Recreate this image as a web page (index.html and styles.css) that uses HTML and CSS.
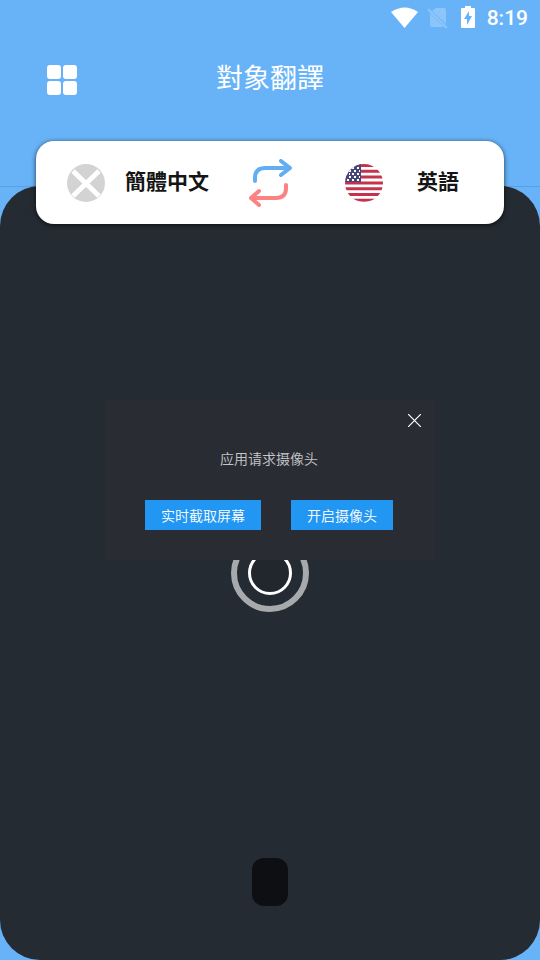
FILE: index.html
```html
<!DOCTYPE html>
<html lang="zh-Hant">
<head>
<meta charset="utf-8">
<meta name="viewport" content="width=device-width, initial-scale=1">
<title>對象翻譯</title>
<link rel="stylesheet" href="styles.css">
</head>
<body>
<div class="app">
  <div class="status">
    <svg class="wifi" width="28" height="22" viewBox="0 0 28 22" aria-hidden="true"><path d="M0 5Q14-4 27 5L13.500 21Z" fill="#fff"/></svg>
    <svg class="sim" width="22" height="22" viewBox="0 0 22 22" aria-hidden="true"><path d="M9 1h8q2 0 2 2v14L5 4zM3 7l14 13H5q-2 0-2-2z" fill="#8cc5fa"/><path d="M3 5l17 16M1 2l18 18" stroke="#8cc5fa" stroke-width="2"/></svg>
    <svg class="battery" width="14" height="22" viewBox="0 0 14 22" aria-hidden="true"><path d="M4 0h6v2h3q1 0 1 1v18q0 1-1 1H1q-1 0-1-1V3q0-1 1-1h3z" fill="#fff"/><path d="M8 5v5h3l-5 9v-6H3z" fill="#68b3f8"/></svg>
    <span class="clock">8:19</span>
  </div>
  <header class="header">
    <button class="menu" type="button" aria-label="選單">
      <svg width="30" height="30" viewBox="0 0 30 30" fill="#fff"><rect width="14" height="14" rx="3"/><rect x="16" width="14" height="14" rx="3"/><rect y="16" width="14" height="14" rx="3"/><rect x="16" y="16" width="14" height="14" rx="3"/></svg>
    </button>
    <h1 class="title">對象翻譯</h1>
  </header>
  <section class="languages">
    <button class="language source" type="button">
      <svg width="38" height="38" viewBox="0 0 38 38" aria-hidden="true"><circle cx="19" cy="19" r="19" fill="#d3d3d3"/><path d="M6 7l26 25M32 7L6 32" stroke="#fff" stroke-width="5"/></svg>
      <span class="name">簡體中文</span>
    </button>
    <button class="swap" type="button" aria-label="交換語言">
      <svg width="44" height="48" viewBox="0 0 44 48" fill="none" stroke-width="4" stroke-linecap="round" stroke-linejoin="round"><path d="M7 22v-3q0-10 10-10h24M33 2l9 7-9 7" stroke="#63aef3"/><path d="M38 26v3q0 10-10 10H3M11 32l-8 7 8 7" stroke="#fb8384"/></svg>
    </button>
    <button class="language target" type="button">
      <svg width="38" height="38" viewBox="0 0 38 38" aria-hidden="true">
        <defs><clipPath id="disc"><circle cx="19" cy="19" r="19"/></clipPath></defs>
        <g clip-path="url(#disc)"><path d="M0 0h38v38H0z" fill="#fff"/><path d="M0 1.500h38M0 7.300h38M0 13.100h38M0 18.900h38M0 24.700h38M0 30.500h38M0 36.300h38" stroke="#c4324b" stroke-width="3"/><path d="M0 0h16v18H0z" fill="#46467a"/><path d="M7 4h2M12 4h2M4 7h2M9 7h2M14 7h1M7 10h2M12 10h2M4 10h1M4 13h2M9 13h2M14 13h1M2 16h2M7 16h2M12 16h2" stroke="#fff" stroke-width="2"/></g>
      </svg>
      <span class="name">英語</span>
    </button>
  </section>
  <main class="stage">
    <div class="camera">
      <button class="shutter" type="button" aria-label="拍照"><span class="shutter-core"></span></button>
      <button class="pill" type="button" aria-label="閃光燈"></button>
    </div>
  </main>
  <div class="overlay">
    <div class="dialog" role="dialog" aria-labelledby="request" lang="zh-Hans">
      <button class="close" type="button" aria-label="关闭">
        <svg width="13" height="13" viewBox="0 0 13 13" stroke="#fff" stroke-width="1.2"><path d="M0 0l13 13M13 0L0 13"/></svg>
      </button>
      <p class="message" id="request">应用请求摄像头</p>
      <div class="actions">
        <button class="action" type="button">实时截取屏幕</button>
        <button class="action" type="button">开启摄像头</button>
      </div>
    </div>
  </div>
</div>
</body>
</html>
```
FILE: styles.css
```css
* {
  box-sizing: border-box;
}

body {
  margin: 0;
  background: #68b3f8;
  font-family: "Noto Sans CJK TC", sans-serif;
}

button {
  margin: 0;
  padding: 0;
  border: 0;
  background: none;
  color: inherit;
  font: inherit;
}

svg {
  display: block;
  flex: none;
}

.app {
  position: relative;
  display: flex;
  flex-direction: column;
  min-height: 100vh;
}

.status {
  display: flex;
  align-items: center;
  justify-content: flex-end;
  height: 36px;
  padding: 0 12px;
  color: #fff;
}

.sim {
  margin: 0 12px 0 8px;
}

.battery {
  margin-bottom: 2px;
}

.clock {
  margin-left: 12px;
  font: 500 21px/36px Roboto, sans-serif;
}

.header {
  display: grid;
  grid-template-columns: 30px 1fr 30px;
  align-items: center;
  height: 88px;
  padding: 0 47px;
}

.title {
  margin: 0;
  padding-bottom: 6px;
  color: #fff;
  font-size: 27px;
  font-weight: 400;
  line-height: 40px;
  text-align: center;
}

.languages {
  position: relative;
  z-index: 1;
  display: grid;
  grid-template-columns: 1fr 44px 1fr;
  align-items: center;
  height: 83px;
  margin: 17px 36px -38px;
  border-radius: 18px;
  background: #fff;
  box-shadow: 0 1px 5px rgba(0, 0, 0, 0.7);
}

.language {
  display: flex;
  align-items: center;
  color: #151515;
}

.source {
  padding: 0 19px 0 31px;
}

.target {
  padding: 0 11px 0 53px;
}

.name {
  flex: 1;
  padding-bottom: 6px;
  font-size: 21px;
  font-weight: 700;
  line-height: 32px;
  text-align: center;
}

.stage {
  display: flex;
  flex: 1;
  box-shadow: inset 0 1px #5b9fdf;
}

.camera {
  display: grid;
  flex: 1;
  grid-template-rows: 1fr auto 1fr;
  justify-items: center;
  border-radius: 40px;
  background: #252b33;
}

.shutter {
  display: grid;
  grid-row: 2;
  place-items: center;
  width: 78px;
  height: 78px;
  border: 6px solid #a7aaad;
  border-radius: 50%;
}

.shutter-core {
  width: 44px;
  height: 44px;
  border: 3px solid #fff;
  border-radius: 50%;
  background: #22272e;
}

.pill {
  grid-row: 3;
  align-self: end;
  width: 36px;
  height: 48px;
  margin-bottom: 54px;
  border-radius: 12px;
  background: #0d0f13;
}

.overlay {
  position: absolute;
  inset: 0;
  z-index: 2;
  display: grid;
  place-items: center;
}

.dialog {
  display: flex;
  flex-direction: column;
  align-items: center;
  padding: 14px 42px 30px 40px;
  background: #2a2c33;
  font-family: "Noto Sans CJK SC", sans-serif;
  font-size: 14px;
  font-weight: 350;
  line-height: 20px;
}

.close {
  align-self: flex-end;
  margin-right: -28px;
}

.message {
  margin: 21px 0 32px;
  color: #c6c7c9;
}

.actions {
  display: flex;
  gap: 30px;
}

.action {
  height: 30px;
  padding: 0 16px;
  background: #2196f3;
  color: #fff;
}
```
